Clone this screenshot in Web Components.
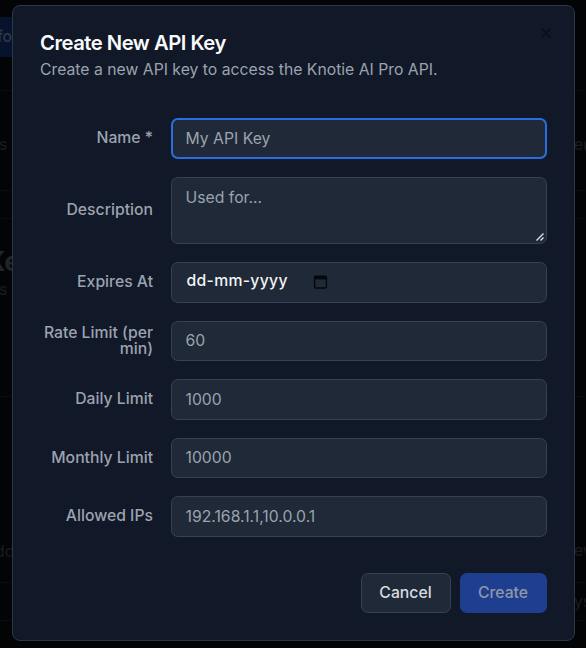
<!DOCTYPE html>
<html><head><meta charset="utf-8"><style>
html,body{margin:0;padding:0;height:100%;background:#030406;font-family:Inter,"Liberation Sans",sans-serif;overflow:hidden}
</style></head><body>
<api-backdrop>
  <api-dialog>
    <span slot="title">Create New API Key</span>
    <span slot="desc">Create a new API key to access the Knotie AI Pro API.</span>
    <api-field label="Name *" value="My API Key" focus></api-field>
    <api-field label="Description" value="Used for..." kind="area"></api-field>
    <api-field label="Expires At" value="dd-mm-yyyy" kind="date"></api-field>
    <api-field label="Rate Limit (per min)" value="60"></api-field>
    <api-field label="Daily Limit" value="1000"></api-field>
    <api-field label="Monthly Limit" value="10000"></api-field>
    <api-field label="Allowed IPs" value="192.168.1.1,10.0.0.1"></api-field>
    <api-button slot="actions">Cancel</api-button>
    <api-button slot="actions" primary>Create</api-button>
  </api-dialog>
</api-backdrop>
<script>
class ApiBackdrop extends HTMLElement{constructor(){super();this.attachShadow({mode:'open'}).innerHTML=`<style>
:host{display:flex;flex-direction:column;width:586px;height:648px;box-sizing:border-box;padding:5px 11.5px 7.5px 12px;position:relative;overflow:hidden}
.ghost{position:absolute;font-size:15.75px;line-height:22px;color:#1b1c1f;white-space:nowrap}
.blue{position:absolute;left:0;top:17px;width:20px;height:40px;background:#07122d;color:#30374a;font-size:15.75px;font-weight:500;line-height:40px;overflow:hidden;text-indent:-3px}
.line{position:absolute;height:1px;background:#0b0c0f;left:0;right:0}
</style>
<div class="blue">fo</div>
<div class="line" style="top:90px"></div><div class="line" style="top:190px"></div><div class="line" style="top:218px"></div>
<div class="line" style="top:396px"></div><div class="line" style="top:582px"></div><div class="line" style="top:620px"></div>
<div class="ghost" style="left:-1px;top:134px">s t</div>
<div class="ghost" style="left:-14px;top:246px;font-size:27px;line-height:32px;font-weight:700;color:#232427">Ke</div>
<div class="ghost" style="left:-1px;top:279px">s</div>
<div class="ghost" style="left:-5px;top:541px">dd</div>
<div class="ghost" style="left:574px;top:134px">en</div>
<div class="ghost" style="left:574px;top:540px">ev</div>
<div class="ghost" style="left:574px;top:591px">ys</div>
<slot></slot>`}}
customElements.define('api-backdrop',ApiBackdrop);

class ApiDialog extends HTMLElement{constructor(){super();this.attachShadow({mode:'open'}).innerHTML=`<style>
:host{display:flex;flex-direction:column;flex:1;box-sizing:border-box;position:relative;z-index:1;background:#111827;border:1px solid #2d3644;border-radius:8px;padding:23px 27px 26px 27px}
.title{font-size:20.25px;line-height:28px;font-weight:600;letter-spacing:-.506px;color:#f9fafb}
.desc{font-size:15.75px;line-height:22.5px;color:#9ca3af;margin-top:2px}
.form{display:flex;flex-direction:column;gap:18px;margin-top:36.5px}
.actions{display:flex;justify-content:flex-end;gap:9px;margin-top:36px}
.close{position:absolute;right:20px;top:19px;width:16px;height:16px;color:#0a0c11}
</style>
<div class="title"><slot name="title"></slot></div>
<div class="desc"><slot name="desc"></slot></div>
<svg class="close" viewBox="0 0 24 24" fill="none" stroke="currentColor" stroke-width="2" stroke-linecap="round" stroke-linejoin="round"><path d="M18 6 6 18M6 6l12 12"/></svg>
<div class="form"><slot></slot></div>
<div class="actions"><slot name="actions"></slot></div>`}}
customElements.define('api-dialog',ApiDialog);

class ApiField extends HTMLElement{constructor(){super();
const a=n=>this.getAttribute(n)||'';
const kind=a('kind');
const extra=kind==='area'
 ?`<svg class="grip" viewBox="0 0 10 10" fill="none"><path d="M8.5 1.5 1.5 8.5" stroke="#e5e7eb" stroke-width="1.2"/><path d="M8.5 5.5 5.5 8.5" stroke="#e5e7eb" stroke-width="1.2"/></svg>`
 :kind==='date'
 ?`<svg class="cal" viewBox="0 0 14 14" fill="none"><path d="M2.5 2h9a1 1 0 0 1 1 1v9a1 1 0 0 1-1 1h-9a1 1 0 0 1-1-1V3a1 1 0 0 1 1-1Z" stroke="#05070b" stroke-width="1.3"/><path d="M1.5 2h11v3h-11z" fill="#05070b"/></svg>`:'';
this.attachShadow({mode:'open'}).innerHTML=`<style>
:host{display:grid;grid-template-columns:113px 376px;column-gap:18px;align-items:center}
.lab{font-size:15.75px;line-height:15.75px;font-weight:500;text-align:right;color:#9ca3af}
:host([focus]) .lab,:host([kind=area]) .lab{position:relative;top:-1px}
.box{box-sizing:border-box;height:40.5px;background:#1f2937;border:1px solid #374151;border-radius:6.75px;padding:0 13.5px;font-size:15.75px;color:#9ca3af;display:flex;align-items:center;position:relative}
:host([focus]) .box{border:2px solid #2b6cdf;padding:0 12.5px;height:41px}
:host([kind=area]) .box{height:67px;align-items:flex-start;padding-top:9px;line-height:22.5px}
:host([kind=date]) .box{padding-bottom:3px}
:host([kind=date]) .val{color:#f3f4f6;font-weight:500;margin-left:1px;letter-spacing:.3px}
.grip{position:absolute;right:1px;bottom:1px;width:10px;height:10px}
.cal{position:absolute;left:141px;top:10.5px;width:15px;height:15px}
</style><div class="lab">${a('label')}</div><div class="box" role="textbox"><span class="val">${a('value')}</span>${extra}</div>`}}
customElements.define('api-field',ApiField);

class ApiButton extends HTMLElement{constructor(){super();this.attachShadow({mode:'open'}).innerHTML=`<style>
:host{display:flex;align-items:center;justify-content:center;box-sizing:border-box;height:40px;width:90px;border:1px solid #374151;border-radius:6.75px;background:#1f2937;color:#d8dbe0;font-size:15.75px;font-weight:500}
:host([primary]){width:87px;background:#1e3f8f;border-color:#1e3f8f;color:#8f97a8}
</style><slot></slot>`}}
customElements.define('api-button',ApiButton);
</script></body></html>
